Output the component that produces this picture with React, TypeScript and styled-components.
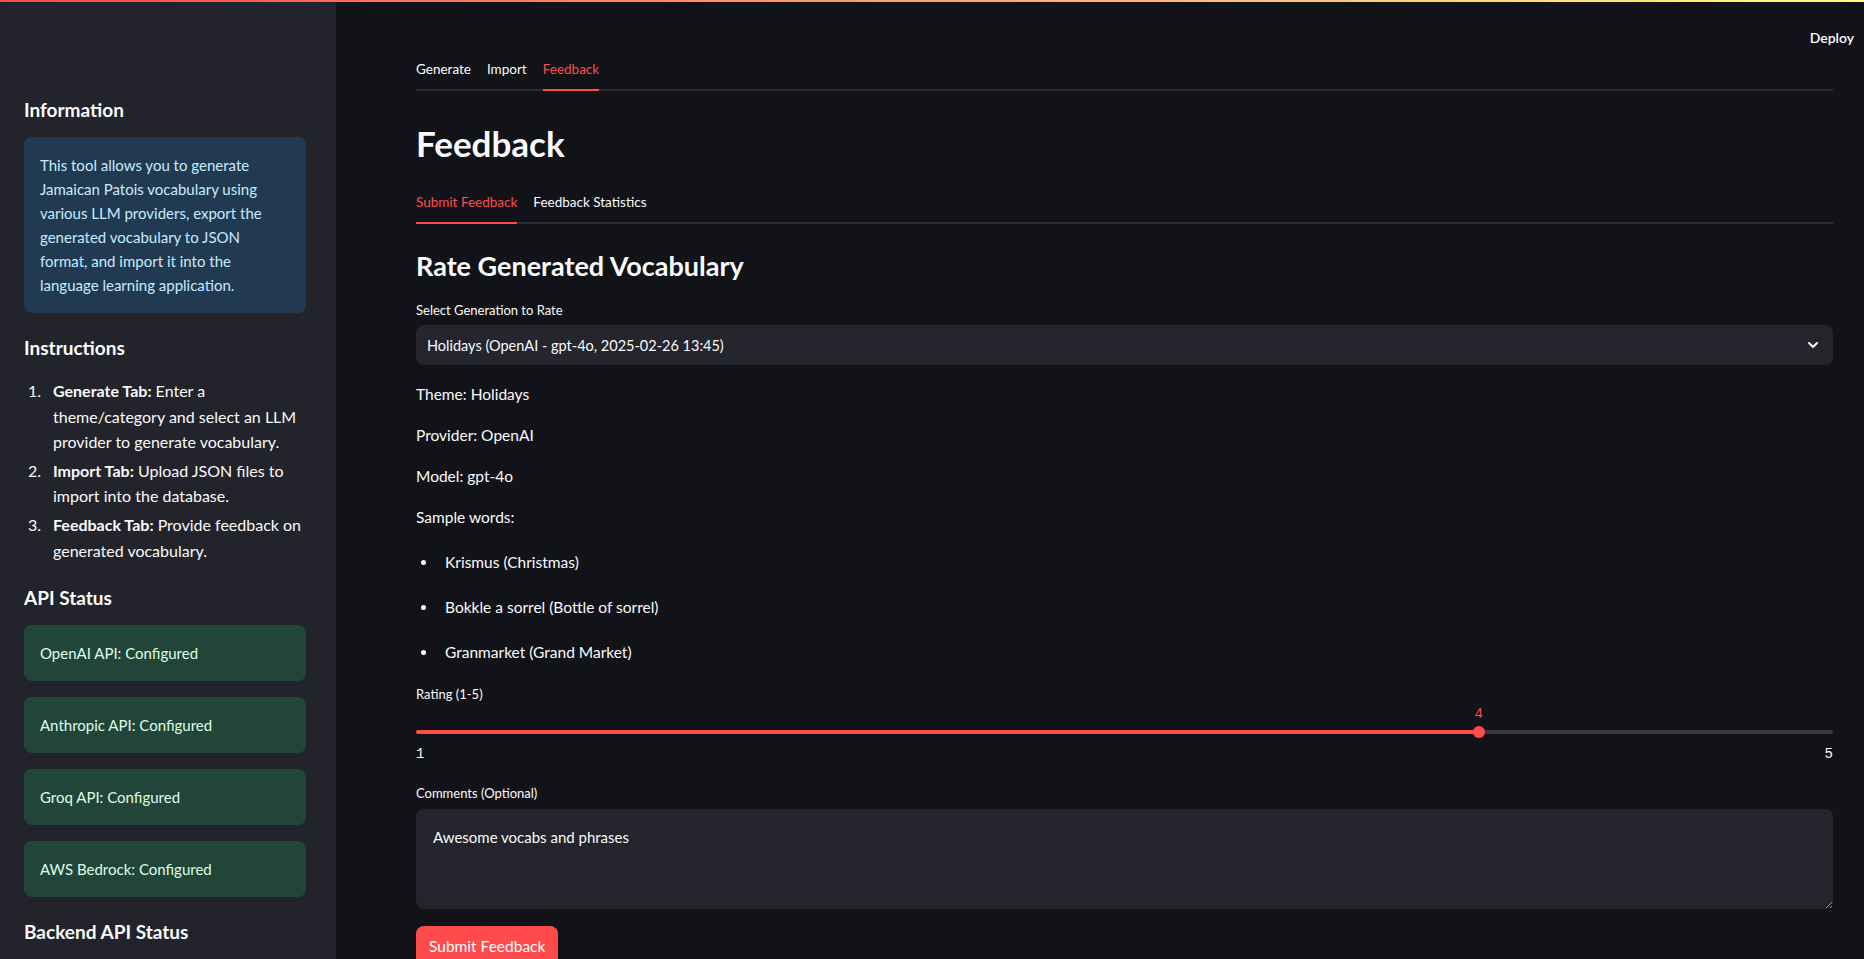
import React from "react";
import styled, { createGlobalStyle } from "styled-components";

const GlobalStyle = createGlobalStyle`
  html, body {
    margin: 0;
    padding: 0;
    height: 100%;
    overflow: hidden;
    background: #121318;
  }
  body {
    font-family: "Lato", "Noto Sans", sans-serif;
    color: #fafafa;
  }
  * {
    box-sizing: border-box;
  }
`;

const instructions = [
  { tab: "Generate Tab", text: "Enter a theme/category and select an LLM provider to generate vocabulary." },
  { tab: "Import Tab", text: "Upload JSON files to import into the database." },
  { tab: "Feedback Tab", text: "Provide feedback on generated vocabulary." },
];

const apis = ["OpenAI API", "Anthropic API", "Groq API", "AWS Bedrock"];

const samples = ["Krismus (Christmas)", "Bokkle a sorrel (Bottle of sorrel)", "Granmarket (Grand Market)"];

const rating = 4;

const ChevronDown = () => (
  <svg width="16" height="16" viewBox="0 0 24 24" fill="none" stroke="#fafafa" strokeWidth="3" strokeLinecap="round" strokeLinejoin="round">
    <path d="M6 9l6 6 6-6" />
  </svg>
);

const App = () => {
  const pct = ((rating - 1) / 4) * 100;
  return (
    <>
      <GlobalStyle />
      <Page>
        <Decoration />
        <Body>
          <Sidebar>
            <SideHeading>Information</SideHeading>
            <Alert $tone="info" $mt={13}>
              This tool allows you to generate Jamaican Patois vocabulary using various LLM providers, export the
              generated vocabulary to JSON format, and import it into the language learning application.
            </Alert>

            <SideHeading $mt={21}>Instructions</SideHeading>
            <Steps>
              {instructions.map((s, i) => (
                <Step key={s.tab}>
                  <StepNum>{i + 1}.</StepNum>
                  <StepBody>
                    <strong>{s.tab}:</strong> {s.text}
                  </StepBody>
                </Step>
              ))}
            </Steps>

            <SideHeading $mt={21}>API Status</SideHeading>
            <StatusList>
              {apis.map((a) => (
                <Alert key={a} $tone="success">
                  {a}: Configured
                </Alert>
              ))}
            </StatusList>

            <SideHeading $mt={21}>Backend API Status</SideHeading>
          </Sidebar>

          <Main>
            <Header>
              <Deploy>Deploy</Deploy>
            </Header>
            <Content>
              <TabList>
                <Tab>Generate</Tab>
                <Tab>Import</Tab>
                <Tab $active>Feedback</Tab>
              </TabList>

              <Title>Feedback</Title>

              <TabList $mt={27}>
                <Tab $active>Submit Feedback</Tab>
                <Tab>Feedback Statistics</Tab>
              </TabList>

              <SubTitle>Rate Generated Vocabulary</SubTitle>

              <FieldLabel $mt={17}>Select Generation to Rate</FieldLabel>
              <Select>
                <span>Holidays (OpenAI - gpt-4o, 2025-02-26 13:45)</span>
                <ChevronDown />
              </Select>

              <Text>Theme: Holidays</Text>
              <Text>Provider: OpenAI</Text>
              <Text>Model: gpt-4o</Text>
              <Text>Sample words:</Text>

              <Bullets>
                {samples.map((w) => (
                  <Bullet key={w}>{w}</Bullet>
                ))}
              </Bullets>

              <FieldLabel $mt={20}>Rating (1-5)</FieldLabel>
              <Track>
                <Fill style={{ width: `${pct}%` }} />
                <Thumb style={{ left: `${pct}%` }}>
                  <ThumbValue>{rating}</ThumbValue>
                </Thumb>
              </Track>
              <Ticks>
                <span>1</span>
                <span>5</span>
              </Ticks>

              <FieldLabel $mt={19}>Comments (Optional)</FieldLabel>
              <TextArea defaultValue="Awesome vocabs and phrases" />

              <PrimaryButton>Submit Feedback</PrimaryButton>
            </Content>
          </Main>
        </Body>
      </Page>
    </>
  );
};

const Page = styled.div`
  height: 100vh;
  display: flex;
  flex-direction: column;
`;

const Decoration = styled.div`
  height: 2px;
  flex-shrink: 0;
  background: linear-gradient(90deg, #ff4b4b, #fffd80);
`;

const Body = styled.div`
  flex: 1;
  min-height: 0;
  display: flex;
`;

const Sidebar = styled.aside`
  width: 336px;
  flex-shrink: 0;
  background: #22232b;
  padding: 94px 30px 0 24px;
  display: flex;
  flex-direction: column;
`;

const SideHeading = styled.h3<{ $mt?: number }>`
  margin: ${(p) => p.$mt ?? 0}px 0 0;
  font-size: 19px;
  font-weight: 700;
  line-height: 28px;
`;

const Alert = styled.div<{ $tone: "info" | "success"; $mt?: number }>`
  margin-top: ${(p) => p.$mt ?? 0}px;
  padding: 16px;
  border-radius: 8px;
  font-size: 15px;
  line-height: 24px;
  background: ${(p) => (p.$tone === "info" ? "#213a51" : "#22453a")};
  color: ${(p) => (p.$tone === "info" ? "#c7ebff" : "#dffde9")};
`;

const Steps = styled.ol`
  list-style: none;
  margin: 16px 0 0;
  padding: 0;
  display: flex;
  flex-direction: column;
  gap: 3px;
`;

const Step = styled.li`
  display: flex;
  font-size: 16px;
  line-height: 25.6px;
`;

const StepNum = styled.span`
  width: 29px;
  flex-shrink: 0;
  padding-left: 4px;
`;

const StepBody = styled.span`
  strong {
    font-weight: 700;
  }
`;

const StatusList = styled.div`
  margin-top: 13px;
  display: flex;
  flex-direction: column;
  gap: 16px;
`;

const Main = styled.main`
  flex: 1;
  min-width: 0;
  display: flex;
  flex-direction: column;
`;

const Header = styled.header`
  height: 57px;
  flex-shrink: 0;
  display: flex;
  justify-content: flex-end;
  align-items: flex-start;
  padding: 26px 10px 0 0;
`;

const Deploy = styled.span`
  font-size: 14px;
  font-weight: 600;
  line-height: 20px;
`;

const Content = styled.div`
  padding: 0 31px 0 80px;
  display: flex;
  flex-direction: column;
`;

const TabList = styled.div<{ $mt?: number }>`
  margin-top: ${(p) => p.$mt ?? 0}px;
  display: flex;
  gap: 16px;
  border-bottom: 2px solid #2a2b33;
`;

const Tab = styled.div<{ $active?: boolean }>`
  font-size: 13.5px;
  line-height: 20px;
  padding-bottom: 10px;
  margin-bottom: -2px;
  border-bottom: 2px solid ${(p) => (p.$active ? "#ff4b4b" : "transparent")};
  color: ${(p) => (p.$active ? "#ff4b4b" : "#fafafa")};
  cursor: pointer;
`;

const Title = styled.h1`
  margin: 31px 0 0;
  font-size: 35px;
  font-weight: 700;
  line-height: 43px;
`;

const SubTitle = styled.h2`
  margin: 25px 0 0;
  font-size: 27px;
  font-weight: 700;
  line-height: 34px;
`;

const FieldLabel = styled.label<{ $mt?: number }>`
  display: block;
  margin-top: ${(p) => p.$mt ?? 0}px;
  font-size: 13px;
  line-height: 20px;
`;

const Select = styled.div`
  margin-top: 5px;
  height: 40px;
  border-radius: 8px;
  background: #24252d;
  padding: 0 12px 0 11px;
  display: flex;
  align-items: center;
  justify-content: space-between;
  font-size: 14.5px;
`;

const Text = styled.p`
  margin: 17px 0 0;
  font-size: 15.5px;
  line-height: 24px;
`;

const Bullets = styled.ul`
  list-style: none;
  margin: 21px 0 0;
  padding: 0;
  display: flex;
  flex-direction: column;
  gap: 21px;
`;

const Bullet = styled.li`
  position: relative;
  padding-left: 29px;
  font-size: 15.5px;
  line-height: 24px;

  &::before {
    content: "";
    position: absolute;
    left: 5px;
    top: 10px;
    width: 5px;
    height: 5px;
    border-radius: 50%;
    background: #fafafa;
  }
`;

const Track = styled.div`
  position: relative;
  margin-top: 26px;
  height: 4px;
  border-radius: 2px;
  background: #383941;
`;

const Fill = styled.div`
  height: 100%;
  border-radius: 2px;
  background: #ff4b4b;
`;

const Thumb = styled.div`
  position: absolute;
  top: 50%;
  width: 12px;
  height: 12px;
  border-radius: 50%;
  background: #ff4b4b;
  transform: translate(-50%, -50%);
`;

const ThumbValue = styled.span`
  position: absolute;
  left: 50%;
  bottom: 16px;
  transform: translateX(-50%);
  font-family: "Liberation Mono", monospace;
  font-size: 14px;
  line-height: 16px;
  color: #ff4b4b;
`;

const Ticks = styled.div`
  margin-top: 10px;
  display: flex;
  justify-content: space-between;
  font-family: "Liberation Mono", monospace;
  font-size: 14px;
  line-height: 20px;
`;

const TextArea = styled.textarea`
  margin-top: 6px;
  height: 100px;
  border: none;
  outline: none;
  border-radius: 8px;
  background: #23242c;
  color: #fafafa;
  color-scheme: dark;
  padding: 16px 17px;
  font-family: "Lato", "Noto Sans", sans-serif;
  font-size: 15px;
  line-height: 24px;
  resize: vertical;
`;

const PrimaryButton = styled.button`
  align-self: flex-start;
  margin-top: 17px;
  height: 40px;
  padding: 0 13px;
  border: none;
  border-radius: 8px;
  background: #ff4b4b;
  color: #ffffff;
  font-family: "Lato", "Noto Sans", sans-serif;
  font-size: 15.5px;
  cursor: pointer;
`;

export default App;
